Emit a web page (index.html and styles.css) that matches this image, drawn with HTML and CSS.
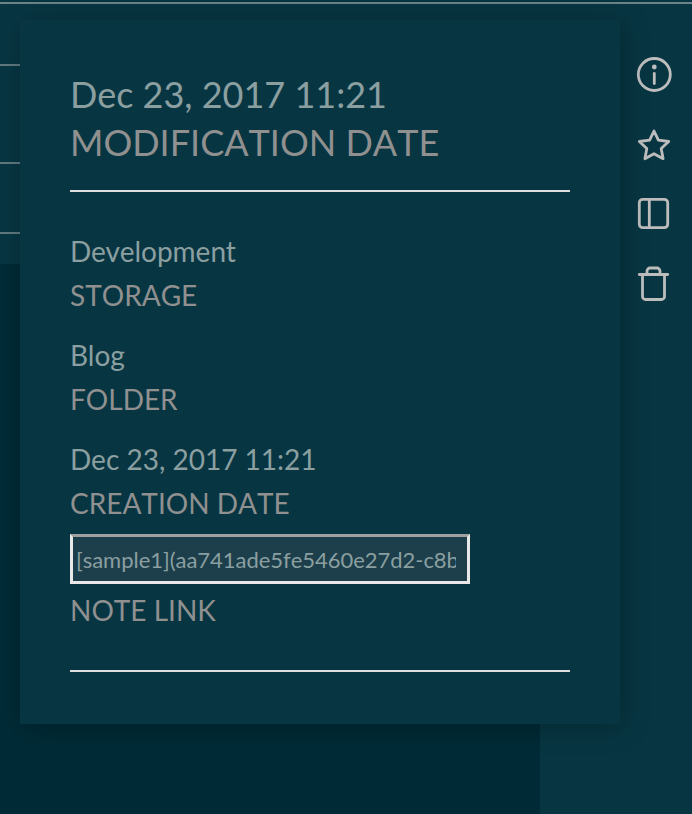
FILE: index.html
```html
<!DOCTYPE html>
<html lang="en">
<head>
<meta charset="utf-8">
<title>Note info</title>
<link rel="stylesheet" href="styles.css">
</head>
<body>
<div class="top-rule"></div>
<div class="backdrop">
  <div class="list">
    <div class="list-row row-a"></div>
    <div class="list-row row-b"></div>
    <div class="list-row row-c"></div>
    <div class="list-rest"></div>
  </div>
  <div class="toolbar">
    <svg class="icon" width="36" height="36" viewBox="0 0 36 36" fill="none" stroke="#bdbdbd" stroke-width="2.8" stroke-linecap="round" stroke-linejoin="round"><circle cx="18.3" cy="18.5" r="16"/><line x1="18.3" y1="17.5" x2="18.3" y2="27.5"/><circle cx="18.3" cy="11" r="2.4" fill="#bdbdbd" stroke="none"/></svg>
    <svg class="icon" width="36" height="36" viewBox="0 0 36 36" fill="none" stroke="#bdbdbd" stroke-width="2.8" stroke-linejoin="round"><path d="M18 5l4.4 9.2 10.3 1.3-7.5 7 1.9 10.2L18 27.7l-9.1 5 1.9-10.2-7.5-7 10.3-1.3z"/></svg>
    <svg class="icon" width="36" height="36" viewBox="0 0 36 36" fill="none" stroke="#bdbdbd" stroke-width="2.8" stroke-linejoin="round"><rect x="3.3" y="3.3" width="28.4" height="28.4" rx="3.5"/><line x1="13.3" y1="3.3" x2="13.3" y2="31.7"/></svg>
    <svg class="icon" width="36" height="36" viewBox="0 0 36 36" fill="none" stroke="#bdbdbd" stroke-width="2.8" stroke-linecap="round" stroke-linejoin="round"><path d="M3.3 8.5h28.4"/><path d="M11 8V5a3 3 0 0 1 3-3h7a3 3 0 0 1 3 3v3"/><path d="M6.5 9v21.5a3 3 0 0 0 3 3h16a3 3 0 0 0 3-3V9"/></svg>
  </div>
</div>
<section class="panel">
  <div class="group group-head">
    <div class="value-lg">Dec 23, 2017 11:21</div>
    <div class="label-lg">MODIFICATION DATE</div>
  </div>
  <hr class="rule">
  <div class="group first">
    <div class="value">Development</div>
    <div class="label">STORAGE</div>
  </div>
  <div class="group">
    <div class="value">Blog</div>
    <div class="label">FOLDER</div>
  </div>
  <div class="group">
    <div class="value">Dec 23, 2017 11:21</div>
    <div class="label">CREATION DATE</div>
  </div>
  <div class="group link-group">
    <input class="link-input" type="text" readonly value="[sample1](aa741ade5fe5460e27d2-c8ba7b3f1a2d.md)">
    <div class="label">NOTE LINK</div>
  </div>
  <hr class="rule bottom">
</section>
</body>
</html>
```
FILE: styles.css
```css
* { box-sizing: border-box; }
html, body { margin: 0; height: 100%; }
body {
  width: 692px;
  height: 814px;
  overflow: hidden;
  position: relative;
  background: #073642;
  font-family: Lato, "Open Sans", sans-serif;
}
.top-rule { height: 2px; margin-top: 2px; background: #6b8388; }
.backdrop { display: flex; height: 810px; }
.list { width: 540px; display: flex; flex-direction: column; }
.list-row { flex: none; border-bottom: 2px solid #5f7a80; background: #073642; }
.row-a { height: 62px; }
.row-b { height: 98px; }
.row-c { height: 70px; }
.list-rest { flex: 1; margin-top: 30px; background: #002b36; }
.toolbar {
  width: 152px;
  display: flex;
  flex-direction: column;
  align-items: flex-end;
  padding: 52px 20px 0 0;
  gap: 34px;
}
.icon { display: block; flex: none; }
.panel {
  position: absolute;
  left: 20px;
  top: 20px;
  width: 600px;
  height: 704px;
  padding: 50px 50px 0 50px;
  background: #073642;
  box-shadow: 3px 3px 25px rgba(0, 0, 0, 0.28);
}
.value-lg { font-size: 36px; line-height: 48px; color: #8b9fa1; }
.label-lg { font-size: 36px; line-height: 48px; color: #909090; font-kerning: none; }
.value { font-size: 28px; line-height: 44px; color: #8b9fa1; }
.label { font-size: 28px; line-height: 44px; color: #909090; font-kerning: none; }
.rule { margin: 0; width: 500px; height: 2px; border: 0; background: #dddddd; }
.group-head { padding-bottom: 8px; }
.group { margin-bottom: 16px; }
.group.first { margin-top: 37px; }
.link-group { margin-bottom: 0; margin-top: -7px; }
.link-input {
  display: block;
  width: 400px;
  height: 50px;
  margin-bottom: 4px;
  padding: 0 11px 0 3px;
  background: #1c3f4b;
  border: 3px solid #e8e8e8;
  border-top-color: #a0a0a0;
  outline: 0;
  color: #8b9fa1;
  font-family: Lato, sans-serif;
  font-size: 22px;
  font-kerning: none;
  letter-spacing: -0.03px;
}
.rule.bottom { margin-top: 38px; }
```
